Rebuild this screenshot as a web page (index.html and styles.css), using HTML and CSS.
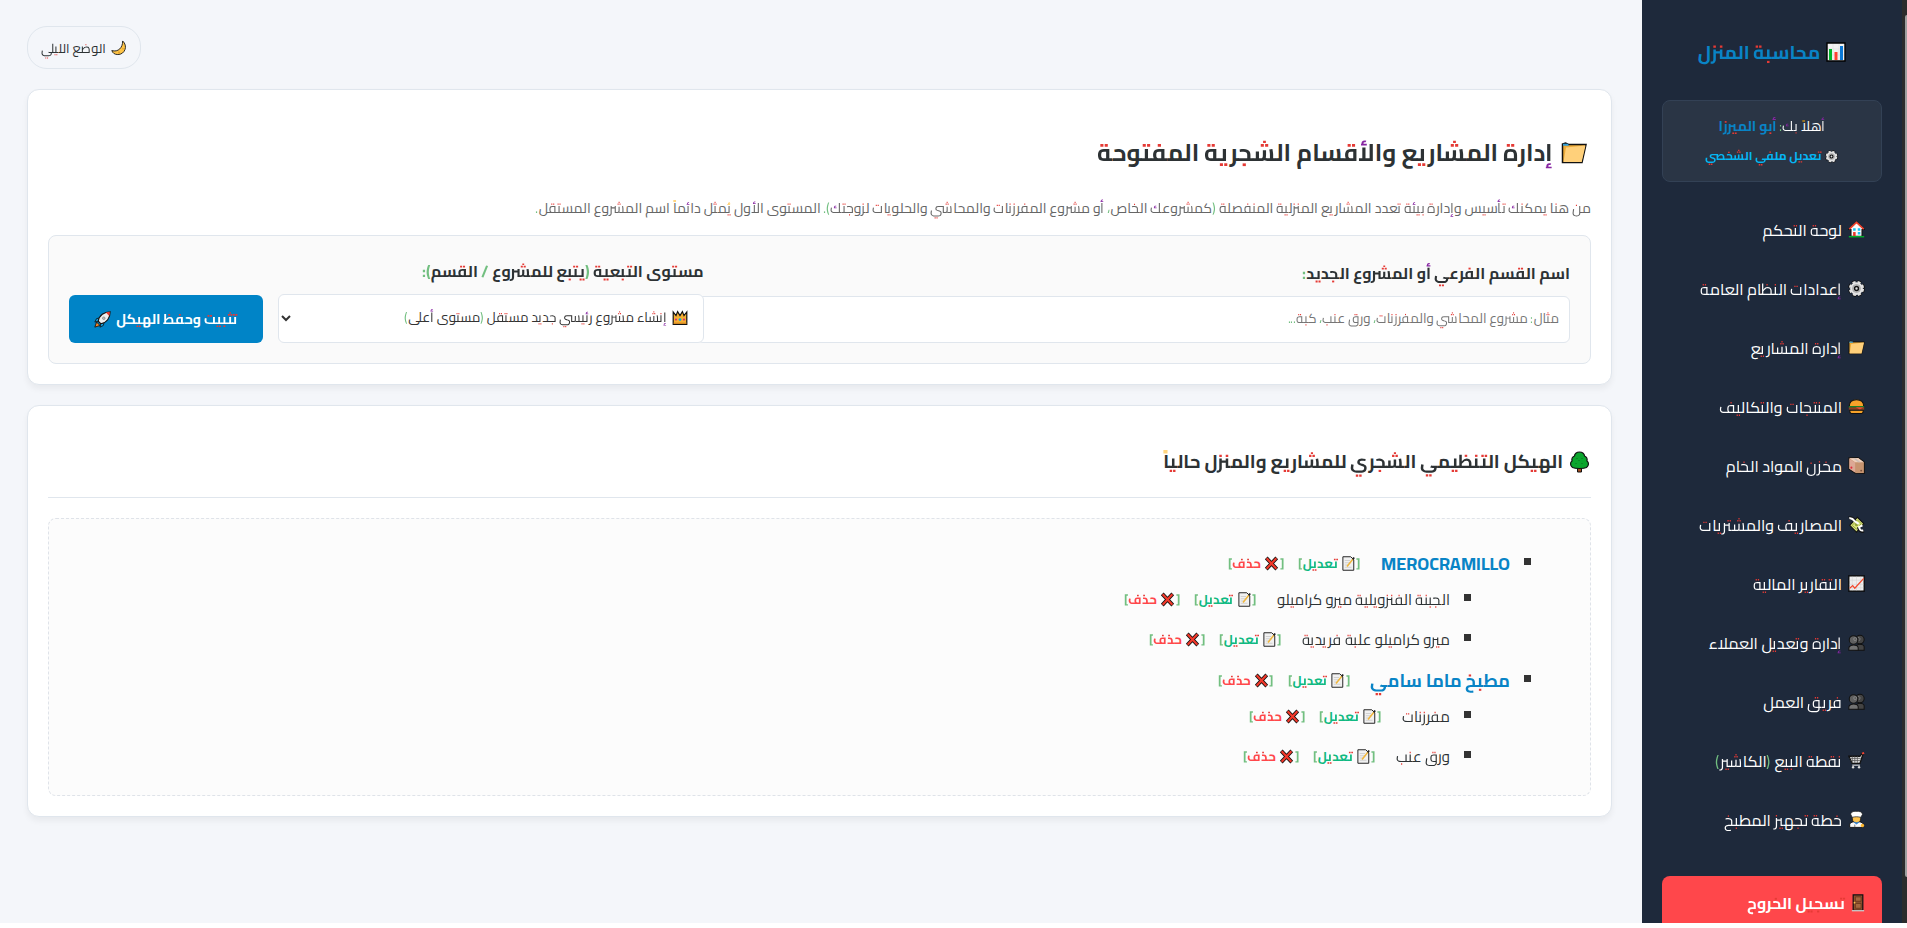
FILE: index.html
```html
<!DOCTYPE html>
<html lang="ar" dir="rtl">
<head>
<meta charset="utf-8">
<title>محاسبة المنزل</title>
<link rel="stylesheet" href="styles.css">
</head>
<body>
<svg class="sprite" aria-hidden="true">
  <symbol id="i-chart" viewBox="0 0 20 20"><path d="M1 1h18v18H1z" fill="#f2f2f2" stroke="#000" stroke-width="1.4"/><path d="M7 2v16M13 2v16M2 7h16M2 13h16" stroke="#ddd" stroke-width=".6"/><path d="M3 7h3v11H3z" fill="#00b52a"/><path d="M8.500 10h3v8h-3z" fill="#ff4130"/><path d="M14 4h3v14h-3z" fill="#0a78d6"/></symbol>
  <symbol id="i-gear" viewBox="0 0 20 20"><circle cx="10" cy="10" r="7.600" fill="none" stroke="#111" stroke-width="4.600" stroke-dasharray="4.200 1.770"/><circle cx="10" cy="10" r="7.500" fill="#e3e3e3"/><circle cx="10" cy="10" r="7.400" fill="none" stroke="#e3e3e3" stroke-width="3" stroke-dasharray="3.400 2.410" stroke-dashoffset="-.4"/><circle cx="10" cy="10" r="4.700" fill="#bdbdbd" stroke="#999" stroke-width=".7"/><circle cx="10" cy="10" r="2.300" fill="#ddd" stroke="#111" stroke-width="1.700"/></symbol>
  <symbol id="i-house" viewBox="0 0 20 20"><path d="M10 1 1 10h2.500v8h13v-8H19z" fill="#fafafa" stroke="#111" stroke-width="1.300"/><path d="M1.500 9.600 10 1.600l8.500 8" fill="none" stroke="#f0432f" stroke-width="1.900"/><path d="M6 8.500h3v3H6zM11.500 8.500h3v3h-3zM11.500 13h3v3h-3z" fill="#16c3f3"/><path d="M6 13h3v5H6z" fill="#e8392b"/><path d="M1 18.500h18" stroke="#00b52a" stroke-width="1.600"/></symbol>
  <symbol id="i-folder" viewBox="0 0 26 22"><path d="M1.500 20.500V2l3-1 3 1.500h17.500l-4 18z" fill="#edab39" stroke="#111" stroke-width="1.500"/><path d="M2 1.800h5l1 2H2z" fill="#2e9bd5"/><path d="M2.500 20 5 5.500 24.500 3.500 20.700 20z" fill="#ffd07a"/></symbol>
  <symbol id="i-burger" viewBox="0 0 20 20"><path d="M1.500 10C1.500 4 5 2 10 2s8.500 2 8.500 8z" fill="#f7a229" stroke="#111" stroke-width="1.200"/><path d="M1 9.500h18v2H1z" fill="#188a2d"/><path d="M1 11h18v3H1z" fill="#8f4020"/><path d="m9 11 5 2.500 4-2.500z" fill="#e64e33"/><path d="M2 14.300h16c0 3-1 4-3 4H5c-2 0-3-1-3-4z" fill="#f7a229" stroke="#111" stroke-width="1.200"/></symbol>
  <symbol id="i-box" viewBox="0 0 20 20"><path d="m1 1 11-.3 7.300 5.300v13.300L8.500 19 1 14z" fill="#c79470" stroke="#111" stroke-width="1.200"/><path d="m1.600 1.600 10.400-.3 6.700 5H8.400z" fill="#efd0bb"/><path d="m1.600 2 6.800 4.600v11.700L1.600 13.800z" fill="#dca895"/><path d="m6 1.500 3 0 6 4.800h-3z" fill="#cdbfb8"/><circle cx="4" cy="12.500" r="1.200" fill="#e02b3c"/><circle cx="15.500" cy="16" r="1.100" fill="#75503a"/></symbol>
  <symbol id="i-money" viewBox="0 0 20 20"><path d="m2 11 9-9.500L18.500 9 10 19z" fill="#dbe77a" stroke="#111" stroke-width="1.200"/><path d="m5 11 6-6.500L15.500 9 10 15.500z" fill="none" stroke="#8a9a39"/><circle cx="10" cy="10" r="2" fill="#94a23c"/><path d="M1 2.500c3-1 5 .5 7 3.500M18.500 17.500c-3 1-5 0-6-4.500" fill="none" stroke="#111" stroke-width="4"/><path d="M1.500 2.700c3-.6 4.500.8 6.500 3.500l4.500 3M18 17c-3 .6-4 0-5-4l4-2" fill="none" stroke="#fff" stroke-width="2.400"/></symbol>
  <symbol id="i-trend" viewBox="0 0 20 20"><path d="M1 1h18v18H1z" fill="#efefef" stroke="#000" stroke-width="1.400"/><path d="M5 2v16M10 2v16M15 2v16M2 6h16M2 11h16M2 15h16" stroke="#d3d3d3" stroke-width=".7"/><path d="m2 15.500 3.500-3 2.500 3L18.500 4" fill="none" stroke="#f3492e" stroke-width="1.500"/></symbol>
  <symbol id="i-people" viewBox="0 0 20 20"><g stroke="#111" stroke-width="1.200"><path d="M9 19v-4c1-2 3-3 5-3s5 1 5 3v4z" fill="#444"/><circle cx="14" cy="6.500" r="5" fill="#444"/><path d="M1 19v-3c1-2 3-3 5.500-3s5 1 5.500 3v3z" fill="#737373"/><circle cx="6.500" cy="7" r="5" fill="#606060"/></g><circle cx="8.500" cy="6" r="1.800" fill="none" stroke="#888"/><path d="M12 4c2 0 3 2 1 4" fill="none" stroke="#888"/></symbol>
  <symbol id="i-cart" viewBox="0 0 20 20"><path d="M1 5h13l2.500-3.500H18l-4 12H5z" fill="#ddd" stroke="#111" stroke-width="1.500"/><path d="M2 7.500h13M3 10h11M5 5v8M8 5v8M11 5v8" stroke="#555" stroke-width=".9"/><path d="M5 15.500h9" stroke="#ddd" stroke-width="1.300"/><path d="m16.500 2 2.500-1" stroke="#ee4535" stroke-width="2.200"/><circle cx="6" cy="18" r="1.400" fill="#ddd"/><circle cx="13" cy="18" r="1.400" fill="#ddd"/></symbol>
  <symbol id="i-chef" viewBox="0 0 20 20"><path d="M2 19.300v-4c1-2 4-3 8-3s7 1 8 3v4z" fill="#fafafa" stroke="#111" stroke-width="1.100"/><circle cx="10" cy="9" r="4.800" fill="#ffc34d" stroke="#111" stroke-width=".8"/><path d="M5 7.500 3 3.500C4 .5 8 0 10 .5c3-.5 7 .5 7 3.500l-2 3.500c-3-1-7-1-10 0z" fill="#fff" stroke="#111" stroke-width=".8"/><path d="m7.500 13 2.500 2 2.500-2" fill="none" stroke="#3184d8" stroke-width="1.500"/><circle cx="17" cy="17" r="2" fill="#ffb72e"/><path d="M8 16v3" stroke="#666"/></symbol>
  <symbol id="i-door" viewBox="0 0 16 20"><path d="M2.500 .8h11v17.500h-11z" fill="#8e5131" stroke="#111" stroke-width="1.400"/><path d="M5 3h6.500v5H5zM5 10.500h6.500v5.500H5z" fill="#a4663e" stroke="#643518" stroke-width=".9"/><path d="M1 18.800h14" stroke="#ccc" stroke-width="1.500"/><circle cx="4" cy="9.600" r="1" fill="#ffc94d"/></symbol>
  <symbol id="i-moon" viewBox="0 0 20 20"><path d="M14.500 1.200c7 6 3 17-6 17-4 0-6.500-2-7.500-5 8 2.500 14-4 13.500-12z" fill="#ffc445" stroke="#222" stroke-width="1.200"/><circle cx="15" cy="11" r="1" fill="#e19c28"/><circle cx="10" cy="15.500" r="1.100" fill="#e19c28"/></symbol>
  <symbol id="i-crown" viewBox="0 0 20 20"><path d="M1.500 18V2.500L5 7l2-5 3 5 3-5 2 5 3.500-4.500V18z" fill="#f5b033" stroke="#111" stroke-width="1.500"/><path d="M2 16.500h16" stroke="#d88720" stroke-width="1.500"/><circle cx="10" cy="12" r="1.700" fill="#16a6d9"/><circle cx="5" cy="12" r="1.300" fill="#db2878"/><circle cx="15" cy="12" r="1.300" fill="#db2878"/></symbol>
  <symbol id="i-rocket" viewBox="0 0 20 20"><path d="m7 8-4 1-2 4 4-1zM12 13l-1 4-4 2 1-4z" fill="#15a8e8" stroke="#111"/><path d="m1 19 2-6 4 4z" fill="#ff8b2b" stroke="#111"/><path d="M5 12c1-7 7-11 14-11 0 7-4 13-11 14z" fill="#eee" stroke="#111" stroke-width="1.300"/><path d="M14 1.700 18.500 1c0 2 0 3-.6 5z" fill="#e8362e"/><circle cx="11.500" cy="8.500" r="1.500" fill="#c4c4c4" stroke="#777" stroke-width=".8"/></symbol>
  <symbol id="i-tree" viewBox="0 0 20 22"><path d="M8 16h4v5H8z" fill="#a34e20" stroke="#111"/><path d="M10 1c3 0 5 2 5 4 2 1 3 3 2.500 5 2 1 2 5-.5 6.500-2 1-5 1-7 1s-5 0-7-1C.5 15 .5 11 2.500 10 2 8 3 6 5 5c0-2 2-4 5-4z" fill="#0ba52d" stroke="#111" stroke-width="1.200"/><path d="m7 7 1 1m4-1 1 1m-7 4 1 1m5 0 1-1m-4-3 1 1" stroke="#08701d"/></symbol>
  <symbol id="i-memo" viewBox="0 0 18 20"><path d="M1.500 1h10.500l4 4v14H1.500z" fill="#f1f1f1" stroke="#222" stroke-width="1.300"/><path d="M4 6h7M4 9h8M4 12h5M4 15h9" stroke="#c6c6c6"/><path d="m7 14 8-10" stroke="#f0b63c" stroke-width="2"/><path d="m14.500 4.500 2-2.500" stroke="#222" stroke-width="2.500"/></symbol>
  <symbol id="i-cross" viewBox="0 0 20 20"><path d="m3 2.500 14 15M17 2.500 3 17.500" stroke="#111" stroke-width="5"/><path d="m3.500 3 13 14M16.500 3l-13 14" stroke="#f3392b" stroke-width="2.900"/></symbol>
</svg>
<div class="app">
  <div class="rail"><span class="thumb"></span></div>
  <aside class="sidebar">
    <div class="brand"><svg class="i20"><use href="#i-chart"/></svg>محاسبة المنزل</div>
    <div class="user">
      <div class="hello">أهلاً بك<span class="p">:</span> <b>أبو الميرزا</b></div>
      <a href="#" class="profile"><svg class="i13"><use href="#i-gear"/></svg>تعديل ملفي الشخصي</a>
    </div>
    <nav class="nav">
      <a href="#"><svg class="i17"><use href="#i-house"/></svg>لوحة التحكم</a>
      <a href="#"><svg class="i17"><use href="#i-gear"/></svg>إعدادات النظام العامة</a>
      <a href="#"><svg class="i17"><use href="#i-folder"/></svg>إدارة المشاريع</a>
      <a href="#"><svg class="i17"><use href="#i-burger"/></svg>المنتجات والتكاليف</a>
      <a href="#"><svg class="i17"><use href="#i-box"/></svg>مخزن المواد الخام</a>
      <a href="#"><svg class="i17"><use href="#i-money"/></svg>المصاريف والمشتريات</a>
      <a href="#"><svg class="i17"><use href="#i-trend"/></svg>التقارير المالية</a>
      <a href="#"><svg class="i17"><use href="#i-people"/></svg>إدارة وتعديل العملاء</a>
      <a href="#"><svg class="i17"><use href="#i-people"/></svg>فريق العمل</a>
      <a href="#"><svg class="i17"><use href="#i-cart"/></svg><span>نقطة البيع <span class="p">(</span>الكاشير<span class="p">)</span></span></a>
      <a href="#"><svg class="i17"><use href="#i-chef"/></svg>خطة تجهيز المطبخ</a>
      <a href="#" class="logout"><svg class="door"><use href="#i-door"/></svg>تسجيل الخروج</a>
    </nav>
  </aside>
  <main class="main">
    <button type="button" class="toggle"><svg class="i16"><use href="#i-moon"/></svg>الوضع الليلي</button>
    <section class="card">
      <h2><svg class="i26"><use href="#i-folder"/></svg>إدارة المشاريع والأقسام الشجرية المفتوحة</h2>
      <p class="intro">من هنا يمكنك تأسيس وإدارة بيئة تعدد المشاريع المنزلية المنفصلة <span class="p">(</span>كمشروعك الخاص<span class="p">،</span> أو مشروع المفرزنات والمحاشي والحلويات لزوجتك<span class="p">).</span> المستوى الأول يُمثل دائماً اسم المشروع المستقل<span class="p">.</span></p>
      <form class="form">
        <div class="field">
          <label for="name">اسم القسم الفرعي أو المشروع الجديد<span class="p">:</span></label>
          <input id="name" type="text" placeholder="مثال: مشروع المحاشي والمفرزنات، ورق عنب، كبة...">
        </div>
        <div class="field">
          <label for="parent">مستوى التبعية <span class="p">(</span>يتبع للمشروع <span class="p">/</span> القسم<span class="p">):</span></label>
          <div class="pick">
            <select id="parent"><option>إنشاء مشروع رئيسي جديد مستقل (مستوى أعلى)</option></select>
            <svg class="crown"><use href="#i-crown"/></svg>
            <svg class="caret" viewBox="0 0 10 8"><path d="m1 2 4 4 4-4" fill="none" stroke="#333" stroke-width="2"/></svg>
          </div>
        </div>
        <button type="submit" class="save">تثبيت وحفظ الهيكل<svg class="i17"><use href="#i-rocket"/></svg></button>
      </form>
    </section>
    <section class="card">
      <h3><svg class="i21"><use href="#i-tree"/></svg>الهيكل التنظيمي الشجري للمشاريع والمنزل حالياً</h3>
      <div class="tree">
        <ul>
          <li>
            <div class="row root"><span class="name">MEROCRAMILLO</span><a href="#" class="edit"><i>[</i><svg class="i15"><use href="#i-memo"/></svg><span>تعديل</span><i>]</i></a><a href="#" class="del"><i>[</i><svg class="i15"><use href="#i-cross"/></svg><span>حذف</span><i>]</i></a></div>
            <ul>
              <li><div class="row"><span class="name">الجبنة الفنزويلية ميرو كراميلو</span><a href="#" class="edit"><i>[</i><svg class="i15"><use href="#i-memo"/></svg><span>تعديل</span><i>]</i></a><a href="#" class="del"><i>[</i><svg class="i15"><use href="#i-cross"/></svg><span>حذف</span><i>]</i></a></div></li>
              <li><div class="row"><span class="name">ميرو كراميلو علبة فريدية</span><a href="#" class="edit"><i>[</i><svg class="i15"><use href="#i-memo"/></svg><span>تعديل</span><i>]</i></a><a href="#" class="del"><i>[</i><svg class="i15"><use href="#i-cross"/></svg><span>حذف</span><i>]</i></a></div></li>
            </ul>
          </li>
          <li>
            <div class="row root"><span class="name">مطبخ ماما سامي</span><a href="#" class="edit"><i>[</i><svg class="i15"><use href="#i-memo"/></svg><span>تعديل</span><i>]</i></a><a href="#" class="del"><i>[</i><svg class="i15"><use href="#i-cross"/></svg><span>حذف</span><i>]</i></a></div>
            <ul>
              <li><div class="row"><span class="name">مفرزنات</span><a href="#" class="edit"><i>[</i><svg class="i15"><use href="#i-memo"/></svg><span>تعديل</span><i>]</i></a><a href="#" class="del"><i>[</i><svg class="i15"><use href="#i-cross"/></svg><span>حذف</span><i>]</i></a></div></li>
              <li><div class="row"><span class="name">ورق عنب</span><a href="#" class="edit"><i>[</i><svg class="i15"><use href="#i-memo"/></svg><span>تعديل</span><i>]</i></a><a href="#" class="del"><i>[</i><svg class="i15"><use href="#i-cross"/></svg><span>حذف</span><i>]</i></a></div></li>
            </ul>
          </li>
        </ul>
      </div>
    </section>
  </main>
</div>
</body>
</html>
```
FILE: styles.css
```css
* { box-sizing: border-box; }
body {
  margin: 0;
  height: 100vh;
  overflow: hidden;
  background: #fff;
  color: #2d3234;
  font-family: "Cairo Play", Cairo, "Noto Sans Arabic", Roboto, "DejaVu Sans", sans-serif;
  font-size: 16px;
}
a { text-decoration: none; color: inherit; }
svg { flex: none; }
.sprite { position: absolute; width: 0; height: 0; }
.i13 { width: 13px; height: 13px; }
.i15 { width: 15px; height: 15px; }
.i16 { width: 16px; height: 16px; }
.i17 { width: 17px; height: 17px; }
.i20 { width: 20px; height: 20px; }
.i21 { width: 21px; height: 22px; }
.i26 { width: 26px; height: 24px; }
.door { width: 14px; height: 18px; }
.p { color: #55b677; }

.app { display: flex; height: calc(100vh - 5px); }
.rail {
  flex: none;
  width: 5px;
  padding: 15px 0 46px 3px;
  background: #2c2c2c;
  direction: ltr;
}
.thumb { display: block; height: 100%; background: #9f9f9f; border-radius: 4px 0 0 4px; }

.sidebar {
  flex: none;
  width: 260px;
  padding: 31px 20px 0;
  overflow: hidden;
  background: #1e293b;
  color: #fff;
}
.brand {
  display: flex;
  justify-content: center;
  align-items: center;
  gap: 6px;
  height: 42px;
  margin-bottom: 27px;
  font-size: 19px;
  font-weight: 700;
  color: #0984c6;
}
.user {
  padding: 10px;
  border: 1px solid #334155;
  border-radius: 8px;
  background: #2a3545;
  text-align: center;
  font-size: 14px;
  line-height: 30px;
}
.user b { color: #0984c6; }
.profile {
  display: flex;
  justify-content: center;
  align-items: center;
  gap: 4px;
  font-size: 12px;
  font-weight: 700;
  color: #06b6f4;
}
.nav { display: flex; flex-direction: column; gap: 10px; padding-top: 23px; }
.nav a {
  display: flex;
  align-items: center;
  gap: 6px;
  height: 49px;
  padding: 0 17px;
  border-radius: 8px;
  font-size: 16px;
  white-space: nowrap;
}
.nav .logout { margin-top: 22px; height: 54px; flex: none; background: #ff474b; font-weight: 700; }

.main {
  flex: 1;
  min-width: 0;
  padding: 26px 30px 0 27px;
  overflow: hidden;
  background: #f4f6fa;
}
.toggle {
  display: flex;
  align-items: center;
  gap: 5px;
  height: 43px;
  margin: 0 auto 20px 0;
  padding: 0 13px;
  border: 1px solid #e0e6ed;
  border-radius: 20px;
  background: transparent;
  color: #2d3234;
  font: inherit;
  font-size: 13px;
}
.card {
  margin-bottom: 20px;
  padding: 20px;
  border: 1px solid #e0e6ed;
  border-radius: 12px;
  background: #fff;
  box-shadow: 0 4px 6px rgba(0, 0, 0, .05);
}
h2, h3 { display: flex; align-items: center; margin: 0; font-weight: 700; }
h2 { gap: 8px; height: 45px; margin-top: 20px; padding-right: 4px; font-size: 24px; }
.intro { margin: 20px 0 14px; line-height: 26px; font-size: 14px; color: #666; white-space: nowrap; }
.form {
  display: grid;
  grid-template-columns: 2fr 1fr auto;
  align-items: end;
  gap: 15px;
  padding: 20px;
  border: 1px solid #e0e6ed;
  border-radius: 8px;
  background: #fafafa;
}
.field { min-width: 0; }
.field label { display: block; margin-bottom: 8px; line-height: 30px; font-weight: 700; white-space: nowrap; }
.field input {
  box-sizing: content-box;
  display: block;
  width: 100%;
  height: 43px;
  padding: 0 10px 2px;
  border: 1px solid #e0e6ed;
  border-radius: 6px;
  background: #fff;
  font-family: inherit;
}
.field input::placeholder { color: #757575; }
.pick { position: relative; }
.pick select {
  display: block;
  width: 100%;
  height: 49px;
  padding: 0 36px 3px 24px;
  appearance: none;
  border: 1px solid #e0e6ed;
  border-radius: 6px;
  background: #fff;
  color: #333;
  font-family: inherit;
}
.crown { position: absolute; top: 16px; right: 16px; width: 16px; height: 16px; }
.caret { position: absolute; top: 20px; left: 3px; width: 10px; height: 8px; }
.save {
  display: flex;
  align-items: center;
  justify-content: center;
  gap: 5px;
  width: 194px;
  height: 48px;
  border: 0;
  border-radius: 6px;
  background: #0084c7;
  color: #fff;
  font: inherit;
  font-size: 14px;
  font-weight: 700;
}
h3 { gap: 6px; height: 72px; padding-right: 1px; border-bottom: 1px solid #e0e6ed; }
.tree {
  margin-top: 20px;
  padding: 28px 59px 19px 20px;
  border: 1px dashed #dfe3e9;
  border-radius: 8px;
  background: #fcfcfc;
}
.tree ul { list-style: none; margin: 0; padding: 0; }
.tree ul ul { padding-right: 60px; }
.tree li + li > .root { margin-top: 5px; }
.tree li > .row::before { content: ""; width: 7px; height: 7px; margin: 0 0 4px 14px; background: #333; }
.row { display: flex; align-items: center; height: 40px; font-size: 15px; }
.root { height: 32px; font-size: 18px; }
.root .name { color: #0984c6; font-weight: 700; }
.row a { display: flex; align-items: center; margin-right: 20px; font-size: 13px; font-weight: 700; }
.row a svg { margin: 0 1px 0 3px; }
.row .del { margin-right: 14px; }
.row i { font-style: normal; color: #55b677; }
.edit { color: #10b981; }
.del { color: #ff474b; }
```
